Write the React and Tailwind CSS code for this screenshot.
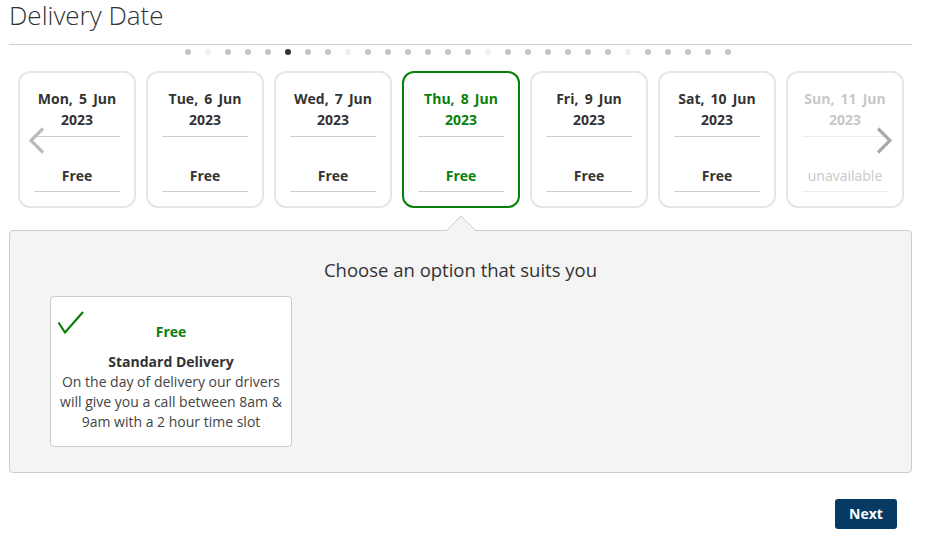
import React from "react";

const days = [
  { d: "Mon, 5 Jun", y: "2023", p: "Free" },
  { d: "Tue, 6 Jun", y: "2023", p: "Free" },
  { d: "Wed, 7 Jun", y: "2023", p: "Free" },
  { d: "Thu, 8 Jun", y: "2023", p: "Free", sel: true },
  { d: "Fri, 9 Jun", y: "2023", p: "Free" },
  { d: "Sat, 10 Jun", y: "2023", p: "Free" },
  { d: "Sun, 11 Jun", y: "2023", p: "unavailable", na: true },
];

const dots = Array.from({ length: 28 }, (_, i) => i);

function Dot({ i }) {
  let c = "bg-[#c4c4c4]";
  if (i === 5) c = "bg-[#333333]";
  else if (i % 7 === 1) c = "bg-[#eeeeee]";
  return <span className={`block w-[6px] h-[6px] rounded-full ${c}`} />;
}

function Card({ day }) {
  const border = day.sel ? "border-[#0a800a]" : "border-[#e6e6e6]";
  const text = day.sel ? "text-[#0a800a]" : day.na ? "text-[#c8c8c8]" : "text-[#333333]";
  const line = day.na ? "border-[#ececec]" : "border-[#cccccc]";
  return (
    <div className={`w-[118px] h-[137px] shrink-0 border-2 ${border} rounded-[12px] bg-white px-[12px] pt-[15px] text-center text-[14px] leading-[21px] ${text}`}>
      <div className={`font-bold pb-[6px] mx-[2px] border-b ${line} [word-spacing:2.5px] whitespace-nowrap`}>
        {day.d}
        <br />
        {day.y}
      </div>
      <div className={`mt-[28px] pb-[5px] mx-[2px] border-b ${line} ${day.na ? "font-normal" : "font-bold"}`}>
        {day.p}
      </div>
    </div>
  );
}

export default function App() {
  return (
    <div className="w-[941px] h-[537px] bg-white font-['Open_Sans',sans-serif] text-[#333333]">
      <div className="ml-[9px] w-[903px]">
        <h1 className="-mt-[1px] text-[26px] font-light leading-[32px] pb-[13px] border-b border-[#cccccc]">
          Delivery Date
        </h1>

        <div className="flex gap-[14px] mt-[4px] pl-[176px]">
          {dots.map((i) => (
            <Dot key={i} i={i} />
          ))}
        </div>

        <div className="relative flex gap-[10px] pl-[9px] mt-[16px]">
          {days.map((d) => (
            <Card key={d.d} day={d} />
          ))}
          <svg className="absolute left-[19px] top-[56px]" width="17" height="27" viewBox="0 0 17 27">
            <polyline points="15,1.5 3,13.5 15,25.5" fill="none" stroke="#bbbbbb" strokeWidth="3.2" />
          </svg>
          <svg className="absolute left-[867px] top-[56px]" width="17" height="27" viewBox="0 0 17 27">
            <polyline points="2,1.5 14,13.5 2,25.5" fill="none" stroke="#aaaaaa" strokeWidth="3.2" />
          </svg>
        </div>

        <div className="relative mt-[22px] h-[243px] border border-[#cccccc] rounded-[4px] bg-[#f4f4f4]">
          <svg className="absolute left-[436px] top-[-16px]" width="30" height="17" viewBox="0 0 30 17">
            <polygon points="0,17 15,1.5 30,17" fill="#f4f4f4" />
            <polyline points="0,16 15,1 30,16" fill="none" stroke="#cccccc" strokeWidth="1" />
          </svg>
          <h2 className="pt-[25px] text-center text-[18.5px] leading-[28px] font-normal">
            Choose an option that suits you
          </h2>
          <div className="relative mt-[12px] ml-[40px] w-[242px] h-[151px] bg-white border border-[#cccccc] rounded-[4px] pt-[25px] px-[6px] text-center text-[14px] leading-[20px]">
            <svg className="absolute left-[6px] top-[14px]" width="27" height="24" viewBox="0 0 27 24">
              <path d="M1.5 11.5 L8 21.5 L26 1" fill="none" stroke="#0a800a" strokeWidth="2.2" strokeLinejoin="miter" />
            </svg>
            <div className="font-bold text-[#0a800a]">Free</div>
            <div className="mt-[10px] font-bold">Standard Delivery</div>
            <div className="text-[#444444]">
              On the day of delivery our drivers will give you a call between 8am &amp; 9am with a 2 hour time slot
            </div>
          </div>
        </div>

        <div className="flex justify-end mt-[26px] pr-[15px]">
          <button className="w-[62px] h-[30px] rounded-[3px] bg-[#043a64] text-white text-[14px] font-bold leading-[20px]">
            Next
          </button>
        </div>
      </div>
    </div>
  );
}
